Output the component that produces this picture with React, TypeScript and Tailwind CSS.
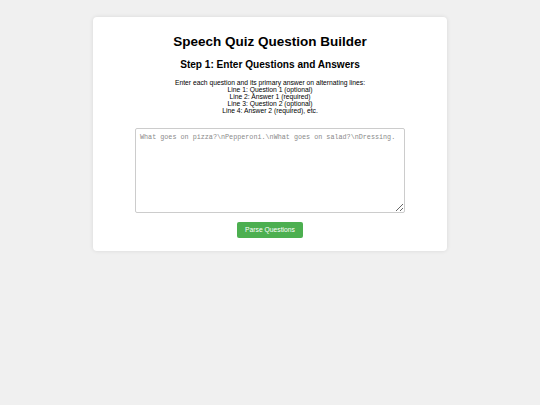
import { useState } from "react";

export default function App() {
  const [text, setText] = useState("");

  return (
    <div className="min-h-[405px] bg-[#f0f0f0] pt-[17px] pb-[1px] font-['Liberation_Sans',Arial,sans-serif] text-black">
      <div className="mx-auto w-[354px] rounded-[4px] bg-white px-[8px] pt-[17px] pb-[13px] shadow-[0_0_4px_rgba(0,0,0,0.1)]">
        <h1 className="text-center text-[13.5px] font-bold leading-[16px]">
          Speech Quiz Question Builder
        </h1>
        <h2 className="mt-[9px] text-center text-[10.1px] font-bold leading-[12px]">
          Step 1: Enter Questions and Answers
        </h2>

        {/* Instructions */}
        <p className="mt-[8px] text-center text-[6.75px] leading-[7px]">
          Enter each question and its primary answer on alternating lines:
          <br />
          Line 1: Question 1 (optional)
          <br />
          Line 2: Answer 1 (required)
          <br />
          Line 3: Question 2 (optional)
          <br />
          Line 4: Answer 2 (required), etc.
        </p>

        <textarea
          value={text}
          onChange={(e) => setText(e.target.value)}
          placeholder="What goes on pizza?\nPepperoni.\nWhat goes on salad?\nDressing."
          className="mx-auto mt-[14px] block h-[85px] w-[270px] rounded-[2px] border border-[#ccc] p-[4px] font-['Liberation_Mono',monospace] text-[6.75px] leading-[8px] placeholder:text-[#8a8a8a] focus:outline-none"
        />

        <div className="mt-[9px] flex justify-center">
          <button
            type="button"
            className="h-[16px] w-[66px] rounded-[2px] bg-[#4caf50] text-[6.75px] text-white"
          >
            Parse Questions
          </button>
        </div>
      </div>
    </div>
  );
}
